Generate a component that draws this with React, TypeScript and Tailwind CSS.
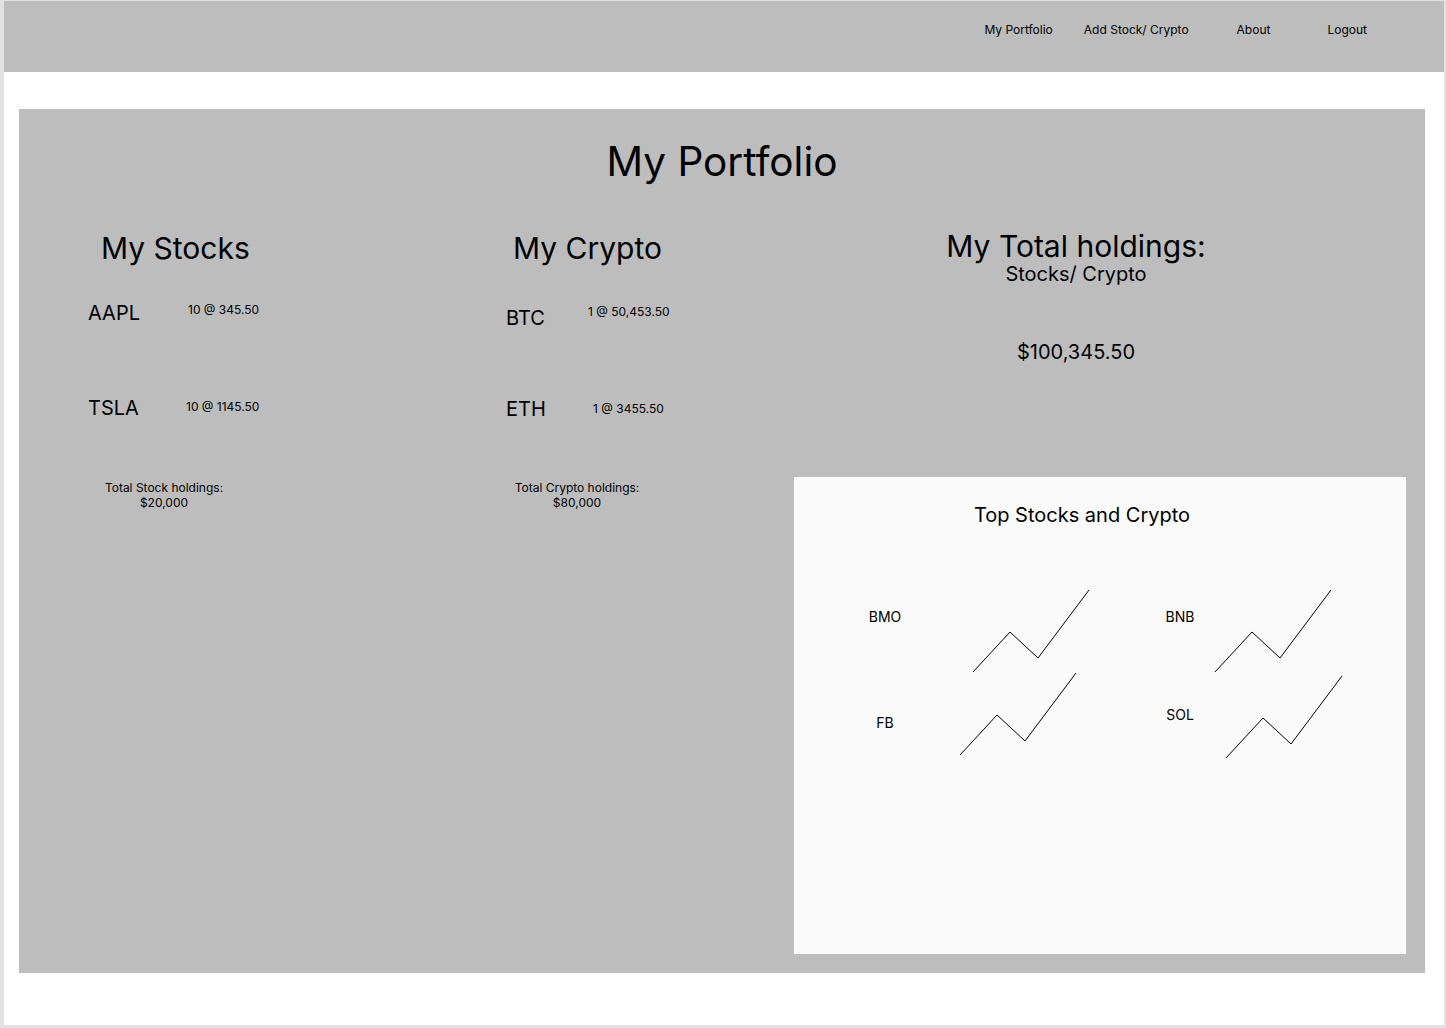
import React from 'react';

const Chart: React.FC = () => (
  <svg width="118" height="84" viewBox="0 0 118 84" fill="none" className="shrink-0">
    <polyline points="1,83 38,43 66,69 117,1" stroke="#000" strokeWidth="1" fill="none" />
  </svg>
);

const Holding: React.FC<{ sym: string; qty: string; symW: string; qtyMt: string; symMt?: string; mt: string }> = ({
  sym,
  qty,
  symW,
  qtyMt,
  symMt = 'mt-0',
  mt,
}) => (
  <div className={`flex items-start ${mt}`}>
    <div className={`${symW} ${symMt} text-[20px] leading-[24px]`}>{sym}</div>
    <div className={`${qtyMt} text-[12px] leading-[16px]`}>{qty}</div>
  </div>
);

const App: React.FC = () => {
  return (
    <div
      className="min-h-screen bg-[#e2e2e2] pl-[4px] pt-[1px] pr-[2px] pb-[3px] text-black"
      style={{ fontFamily: 'Inter, "Noto Sans", sans-serif' }}
    >
      <div className="h-[1024px] bg-white">
        {/* Header */}
        <div className="h-[71px] bg-[#bdbdbd] flex justify-end items-start pt-[21px] pr-[77px] text-[12px] leading-[16px]">
          <span>My Portfolio</span>
          <span className="ml-[31px]">Add Stock/ Crypto</span>
          <span className="ml-[48px]">About</span>
          <span className="ml-[57px]">Logout</span>
        </div>

        {/* Main panel */}
        <div className="mt-[37px] ml-[15px] mr-[19px] h-[864px] bg-[#bdbdbd] flex flex-col">
          <h1 className="pt-[29px] text-center text-[40.5px] leading-[48px] font-normal">My Portfolio</h1>

          <div className="flex">
            {/* Stocks */}
            <div className="w-[411px] pl-[69px] pt-[44px]">
              <h2 className="ml-[13px] text-[30px] leading-[36px]">My Stocks</h2>
              <Holding sym="AAPL" qty="10 @ 345.50" symW="w-[100px]" qtyMt="mt-[1px]" mt="mt-[35px]" />
              <Holding sym="TSLA" qty="10 @ 1145.50" symW="w-[98px]" qtyMt="mt-[3px]" mt="mt-[71px]" />
              <div className="mt-[60px] w-[152px] text-center text-[12px] leading-[15px]">
                <div>Total Stock holdings:</div>
                <div>$20,000</div>
              </div>
            </div>

            {/* Crypto */}
            <div className="w-[364px] pl-[76px] pt-[44px]">
              <h2 className="ml-[7px] text-[30px] leading-[36px]">My Crypto</h2>
              <Holding sym="BTC" qty="1 @ 50,453.50" symW="w-[82px]" symMt="mt-[2px]" qtyMt="mt-0" mt="mt-[38px]" />
              <Holding sym="ETH" qty="1 @ 3455.50" symW="w-[87px]" qtyMt="mt-[4px]" mt="mt-[67px]" />
              <div className="mt-[59px] w-[142px] text-center text-[12px] leading-[15px]">
                <div>Total Crypto holdings:</div>
                <div>$80,000</div>
              </div>
            </div>

            {/* Totals + top list */}
            <div className="w-[612px] flex flex-col">
              <div className="pt-[44px] pr-[48px] text-center">
                <div className="text-[30px] leading-[32px]">My Total holdings:</div>
                <div className="text-[20px] leading-[24px]">Stocks/ Crypto</div>
                <div className="mt-[54px] text-[20px] leading-[24px]">$100,345.50</div>
              </div>

              <div className="mt-[113px] h-[477px] bg-[#fafafa] flex flex-col">
                <div className="pt-[26px] pr-[36px] text-center text-[20px] leading-[24px]">Top Stocks and Crypto</div>

                <div className="mt-[62px] flex">
                  <div className="w-[346px] pl-[71px] flex items-start">
                    <div className="w-[40px] mt-[19px] text-center text-[14px] leading-[17px]">BMO</div>
                    <div className="ml-[67px]">
                      <Chart />
                    </div>
                  </div>
                  <div className="pl-[20px] flex items-start">
                    <div className="w-[40px] mt-[19px] text-center text-[14px] leading-[17px]">BNB</div>
                    <div className="ml-[14px]">
                      <Chart />
                    </div>
                  </div>
                </div>

                <div className="-mt-[1px] flex">
                  <div className="w-[346px] pl-[71px] flex items-start">
                    <div className="w-[40px] mt-[42px] text-center text-[14px] leading-[17px]">FB</div>
                    <div className="ml-[54px]">
                      <Chart />
                    </div>
                  </div>
                  <div className="pl-[20px] flex items-start">
                    <div className="w-[40px] mt-[34px] text-center text-[14px] leading-[17px]">SOL</div>
                    <div className="ml-[25px] mt-[3px]">
                      <Chart />
                    </div>
                  </div>
                </div>
              </div>
            </div>
          </div>
        </div>
      </div>
    </div>
  );
};

export default App;
